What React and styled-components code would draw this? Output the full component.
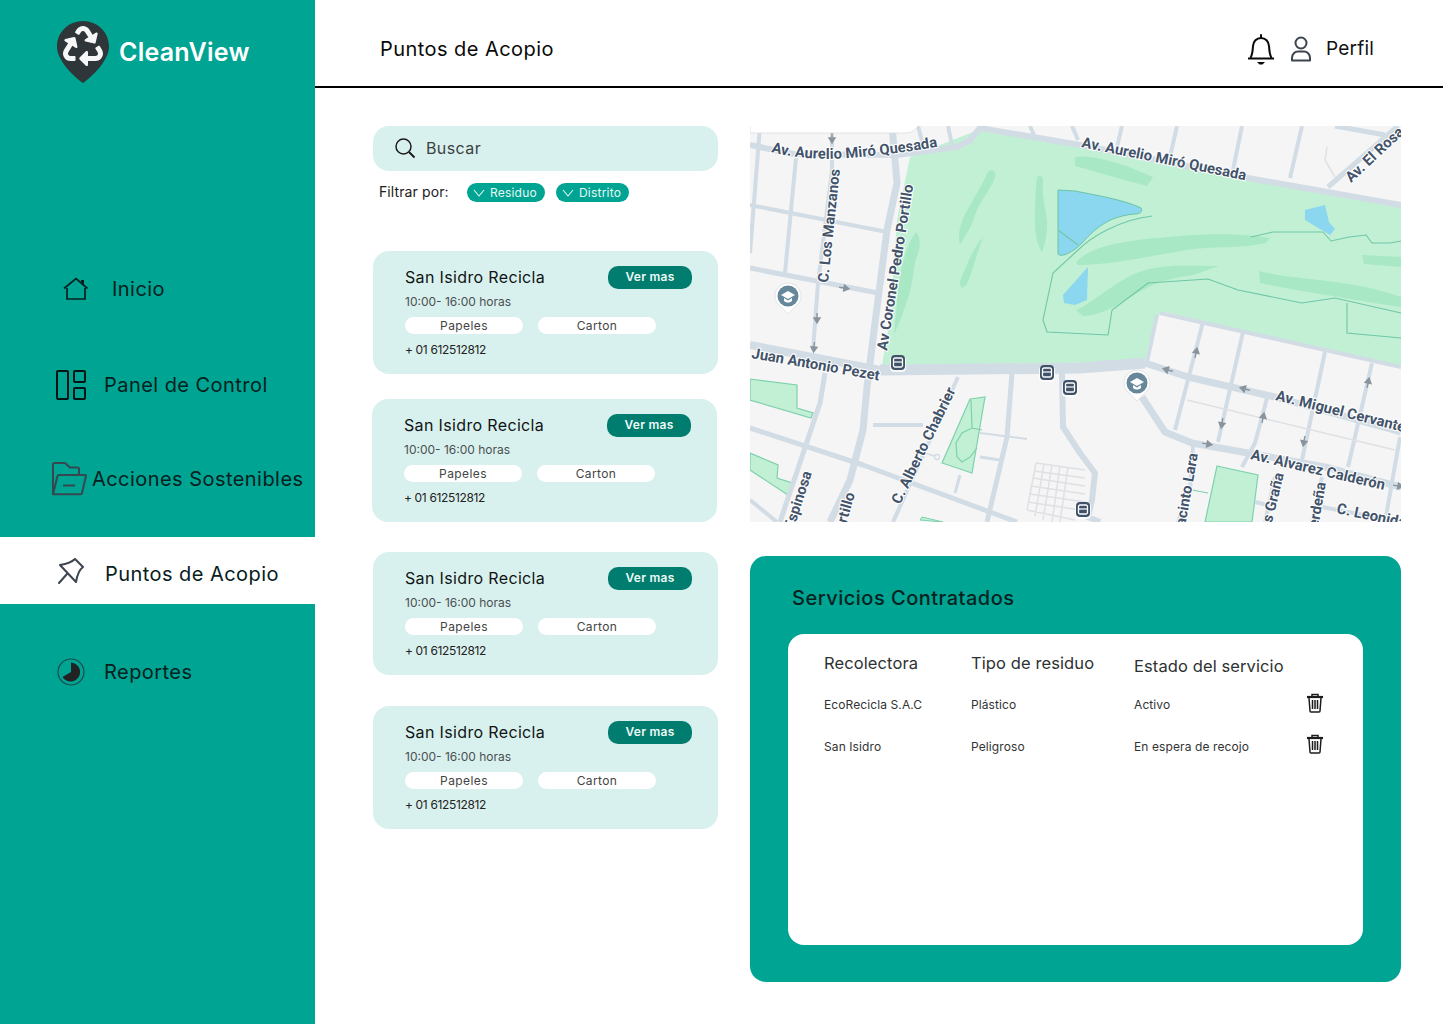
import React from "react";
import styled, { createGlobalStyle } from "styled-components";
import { FaRecycle } from "react-icons/fa";

const GlobalStyle = createGlobalStyle`
  html, body { margin: 0; padding: 0; background: #fff; }
  * { box-sizing: border-box; }
  body { font-family: "Inter", "Liberation Sans", sans-serif; }
`;

const Page = styled.div`
  display: flex;
  width: 1443px;
  height: 1024px;
  overflow: hidden;
`;

const Sidebar = styled.aside`
  width: 315px;
  flex-shrink: 0;
  background: #00a493;
`;

const Logo = styled.div`
  display: flex;
  align-items: flex-start;
  gap: 10px;
  height: 256px;
  padding: 21px 0 0 57px;
`;

const LogoText = styled.span`
  margin-top: 16px;
  color: #fff;
  font-size: 25px;
  line-height: 30px;
  font-weight: 600;
  letter-spacing: 0.25px;
`;

const NavItem = styled.div`
  display: flex;
  align-items: center;
  height: ${(p) => (p.$active ? 67 : 66)}px;
  margin-top: ${(p) => p.$top || 0}px;
  padding-left: ${(p) => p.$left}px;
  gap: ${(p) => p.$gap}px;
  background: ${(p) => (p.$active ? "#fff" : "transparent")};
  color: #07201d;
  font-size: 20px;
  letter-spacing: 0.45px;
`;

const NavLabel = styled.span`
  margin-top: ${(p) => p.$down || 0}px;
  white-space: nowrap;
`;

const Main = styled.main`
  flex: 1;
  display: flex;
  flex-direction: column;
`;

const Header = styled.header`
  display: flex;
  align-items: center;
  height: 88px;
  padding: 12px 69px 0 65px;
  border-bottom: 2px solid #000;
`;

const HeaderTitle = styled.h1`
  flex: 1;
  margin: 0;
  font-size: 20px;
  font-weight: 400;
  letter-spacing: 0.45px;
  color: #0a0a0a;
`;

const HeaderActions = styled.div`
  display: flex;
  align-items: center;
  gap: 15px;
`;

const ProfileText = styled.span`
  margin: -2px 0 0 -1px;
  font-size: 19px;
  letter-spacing: 0.2px;
  color: #111;
`;

const Content = styled.div`
  display: grid;
  grid-template-columns: 345px 651px;
  column-gap: 32px;
  padding: 38px 0 0 58px;
`;

const LeftColumn = styled.section`
  display: flex;
  flex-direction: column;
`;

const SearchBar = styled.div`
  display: flex;
  align-items: center;
  gap: 10px;
  height: 45px;
  padding: 0 0 1px 21px;
  border-radius: 16px;
  background: #d9f1ee;
  font-size: 16px;
  letter-spacing: 0.4px;
  color: #3a3f3f;
`;

const FilterRow = styled.div`
  display: flex;
  align-items: center;
  height: 19px;
  margin-top: 12px;
  padding-left: 6px;
  font-size: 14px;
  letter-spacing: 0.1px;
  color: #1b1b1b;
`;

const FilterLabel = styled.span`
  width: 88px;
  margin-top: -3px;
`;

const Chip = styled.span`
  display: flex;
  align-items: center;
  gap: 5px;
  height: 19px;
  width: ${(p) => p.$width}px;
  margin-right: 11px;
  padding-left: 6px;
  border-radius: 10px;
  background: #00a493;
  color: #e6f7f4;
  font-size: 12px;
  letter-spacing: 0.2px;
`;

const Card = styled.article`
  display: flex;
  flex-direction: column;
  width: 345px;
  height: 123px;
  margin-top: ${(p) => p.$top}px;
  margin-left: ${(p) => p.$shift || 0}px;
  padding: 15px 26px 0 32px;
  border-radius: 16px;
  background: #d9f1ee;
`;

const CardHead = styled.div`
  display: flex;
  align-items: center;
  justify-content: space-between;
  height: 23px;
`;

const CardTitle = styled.h3`
  margin: -2px 0 0;
  font-size: 16px;
  font-weight: 400;
  letter-spacing: 0.35px;
  color: #101414;
`;

const ViewButton = styled.span`
  display: flex;
  align-items: center;
  justify-content: center;
  width: 84px;
  height: 23px;
  padding-bottom: 2px;
  border-radius: 10px;
  background: #007d6e;
  color: #eef9f7;
  font-size: 12px;
  font-weight: 600;
  letter-spacing: 0.25px;
`;

const CardHours = styled.div`
  margin-top: 5px;
  height: 15px;
  line-height: 15px;
  font-size: 12px;
  color: #4a5050;
`;

const Tags = styled.div`
  display: flex;
  gap: 15px;
  margin-top: 8px;
`;

const Tag = styled.span`
  display: flex;
  align-items: center;
  justify-content: center;
  width: 118px;
  height: 17px;
  border-radius: 9px;
  background: #fff;
  font-size: 12px;
  letter-spacing: 0.4px;
  color: #444;
`;

const CardPhone = styled.div`
  margin-top: 8px;
  line-height: 15px;
  font-size: 12px;
  letter-spacing: -0.35px;
  color: #222;
`;

const RightColumn = styled.section`
  display: flex;
  flex-direction: column;
`;

const MapFrame = styled.div`
  height: 396px;
  background: #f5f5f6;
  overflow: hidden;
`;

const ServicesPanel = styled.div`
  display: flex;
  flex-direction: column;
  height: 426px;
  margin-top: 34px;
  padding: 29px 38px 37px;
  border-radius: 16px;
  background: #00a493;
`;

const PanelTitle = styled.h2`
  margin: 0 0 0 4px;
  height: 49px;
  line-height: 27px;
  font-size: 20px;
  font-weight: 500;
  letter-spacing: 0.5px;
  color: #08231f;
`;

const TableCard = styled.div`
  flex: 1;
  padding: 12px 39px 0 36px;
  border-radius: 16px;
  background: #fff;
`;

const TableRow = styled.div`
  display: grid;
  grid-template-columns: 147px 163px 1fr 18px;
  align-items: center;
  height: ${(p) => p.$height}px;
`;

const HeadCell = styled.span`
  font-size: 16.500px;
  letter-spacing: 0.1px;
  color: #2e3232;
  margin-top: ${(p) => p.$down || 0}px;
`;

const BodyCell = styled.span`
  font-size: 12px;
  letter-spacing: 0.1px;
  color: #333;
`;

const TrashSvg = styled.svg`
  margin-top: ${(p) => p.$lift || 0}px;
`;

const MapLabel = styled.text`
  font-family: "Roboto", "Liberation Sans", sans-serif;
  font-size: 14.800px;
  font-weight: 700;
  fill: #42536a;
  stroke: #fff;
  stroke-width: 2px;
  paint-order: stroke;
`;

const LogoPin = () => (
  <svg width="52" height="62" viewBox="0 0 52 62">
    <path
      d="M26 0C11.6 0 0 11.4 0 25.6 0 38.600 14 53 25 61.400c.6.500 1.400.500 2 0C38 53 52 38.600 52 25.600 52 11.400 40.400 0 26 0Z"
      fill="#2f3639"
    />
    <FaRecycle x="6" y="5" size={40} color="#f6f7f7" />
  </svg>
);

const HomeIcon = () => (
  <svg width="26" height="24" viewBox="0 0 26 24" fill="none" stroke="#06211e" strokeWidth="1.700">
    <path d="M1 11.500 13 1.500l11.500 10" />
    <path d="M4 11v11h18V11" />
    <path d="M19.500 7V3" strokeWidth="3" />
  </svg>
);

const PanelIcon = () => (
  <svg width="30" height="30" viewBox="0 0 30 30" fill="none" stroke="#041513" strokeWidth="2">
    <rect x="1" y="1" width="11" height="28" rx="1" />
    <rect x="18" y="1" width="11" height="11" rx="1" />
    <rect x="18" y="18" width="11" height="11" rx="1" />
  </svg>
);

const FolderIcon = () => (
  <svg width="36" height="36" viewBox="51 460 36 36" fill="none" stroke="#37474f" strokeWidth="2" strokeLinejoin="round">
    <path d="M53 493V463.500c0-.800.700-1.500 1.500-1.500H65l5 4.500h7.500c.800 0 1.500.700 1.500 1.500v5.500" />
    <path d="M59 474h26c.700 0 1 .500.900 1.200L82 492c-.200.800-.800 1.300-1.500 1.300H53L57.500 475c.200-.600.800-1 1.500-1Z" />
    <path d="M63 484.500h12" />
  </svg>
);

const PinIcon = () => (
  <svg width="26" height="26" viewBox="58 557 26 26" fill="none" stroke="#3c4450" strokeWidth="2" strokeLinejoin="round" strokeLinecap="round">
    <path d="M60 564C66 563 71 562 75 558l8 8c-4 3-6 9-7 15Z" />
    <path d="M59 582l8-9" />
  </svg>
);

const ReportIcon = () => (
  <svg width="28" height="28" viewBox="0 0 28 28">
    <circle cx="14" cy="14" r="13" fill="none" stroke="#1f4a48" strokeWidth="1.200" />
    <path d="M14 4.500A9.500 9.500 0 1 1 5.500 19L14 14Z" fill="#222" />
  </svg>
);

const BellIcon = () => (
  <svg width="28" height="32" viewBox="0 0 28 32" fill="none" stroke="#0a0a0a" strokeWidth="2">
    <path d="M3.500 25c2.200-4 2.200-8 2.500-12 .3-4.500 3.500-8 8-8s7.700 3.500 8 8c.3 4 .3 8 2.500 12" />
    <path d="M1 25.500h26" />
    <path d="M14 5V2" strokeLinecap="round" />
    <path d="M10 29h8l-2.500 2.500h-3Z" fill="#0a0a0a" stroke="none" />
  </svg>
);

const UserIcon = () => (
  <svg width="22" height="26" viewBox="0 0 22 26" fill="none" stroke="#3c4450" strokeWidth="2">
    <circle cx="11" cy="7" r="5.500" />
    <path d="M2 24.500v-2.500c0-4 3-6.500 6-6.500h6c3 0 6 2.500 6 6.500v2.500Z" strokeLinejoin="round" />
  </svg>
);

const SearchIcon = () => (
  <svg width="22" height="22" viewBox="0 0 22 22" fill="none" stroke="#1c1c1c" strokeWidth="1.500">
    <circle cx="9.500" cy="9.500" r="7.500" />
    <path d="M15 15l5.500 5.500" strokeWidth="2" />
  </svg>
);

const ChevronIcon = () => (
  <svg width="12" height="8" viewBox="0 0 12 8" fill="none" stroke="#e6f7f4" strokeWidth="1.100">
    <path d="M1 1l5 6 5-6" />
  </svg>
);

const TrashIcon = ({ lift }) => (
  <TrashSvg $lift={lift} width="18" height="20" viewBox="0 0 18 20" fill="none" stroke="#1c1c1c" strokeWidth="1.500">
    <path d="M1 4h16" strokeWidth="2.200" />
    <path d="M6 3V1.500h6V3" />
    <path d="M3 5l1 13c0 .600.500 1 1 1h8c.500 0 1-.400 1-1l1-13" />
    <path d="M6.500 7v9M9 7v9M11.500 7v9" />
  </TrashSvg>
);

// all map coordinates are page pixels, the viewBox starts at the map's corner
const roads = [
  ["M750 145L793 154 897 155 957 147 970 140 980 128 1080 145 1248 178 1401 205", 6],
  ["M760 126L750 253", 4],
  ["M796 158L785 273", 4],
  ["M832 126V170L818 283 813 350", 4],
  ["M750 205L887 232", 4],
  ["M750 268L878 293", 5],
  ["M892 126L897 183 887 230 875 323 867 387 863 430 850 480 830 522", 7],
  ["M918 126L923 145M948 126L952 145M1030 126L1034 135M1072 126L1078 140", 4],
  ["M1122 126L1117 147M1177 126L1170 157M1242 126L1233 170M1302 126L1290 178", 4],
  ["M1398 126L1328 187M1335 126L1385 135", 5],
  ["M750 345L880 370", 8],
  ["M880 370L1080 368 1145 363", 11],
  ["M1145 363L1188 377 1275 397 1401 432", 7],
  ["M958 377L893 522", 4],
  ["M1012 373L1007 437 987 522", 5],
  ["M1062 373L1063 427 1080 453 1095 473 1092 500 1088 517 1100 522", 6],
  ["M750 428L863 465 1017 522", 5],
  ["M825 373L820 403 780 522", 5],
  ["M873 425H923", 4],
  ["M750 500L777 522", 4],
  ["M980 433L1027 439", 2],
  ["M980 457L1000 460M960 475L955 493", 3],
  ["M925 453L937 457", 1.500],
  ["M1203 322L1175 430", 4],
  ["M1243 332L1218 442", 4],
  ["M1325 352L1302 460", 4],
  ["M1372 363L1348 467", 4],
  ["M1267 398L1255 443 1242 467", 4],
  ["M1400 437L1385 522", 4],
  ["M1160 313L1401 367M1157 315L1147 362", 4],
  ["M1142 397L1165 432 1192 443 1248 453 1325 467 1401 487", 7],
  ["M1193 445L1190 490 1178 522M1275 477L1265 522M1322 477L1312 522", 4],
  ["M1322 507L1401 522M1255 502L1268 505", 4],
];

const faintLines =
  "M1187 400L1395 450M1327 147L1325 160 1335 177M1036 463L1027 510M1044 464L1035 516M1052 465L1043 520M1060 466L1052 522M1068 467L1060 522M1036 463L1085 470M1034 471L1085 478M1033 478L1085 486M1031 486L1085 494M1030 494L1085 502M1028 502L1080 510M1027 510L1075 520";

const darkGreens = [
  "M988 172c3-4 9-1 7 5-3 10-12 20-18 33-3 6-4 14-10 23l-7 12c-3-10 1-25 8-36 7-13 14-24 20-37Z",
  "M983 237c-5 13-9 28-13 40-2 5-6 13-9 10-3-5 2-12 5-20 4-10 10-22 17-30Z",
  "M1037 177c4-3 7 1 6 6-1 12 2 24 4 36 1 12-2 26-5 33-5-8-7-18-7-30 0-15 0-30 2-45Z",
  "M916 232c4 5 5 12 2 22-4 8-4 18-6 28-2 12-10 35-18 53l4-45c2-20 8-45 18-58Z",
  "M1075 157c20-2 45 5 78 20l-6 9c-25-6-52-15-72-20Z",
  "M1076 262c20-20 60-22 104-26 32-3 70-2 90 2l-4 5c-25 6-55 3-80 7-35 6-75 15-108 15Z",
  "M1076 310c15-6 32-23 58-36 23-10 50-9 85-8l-26 9c-20 3-35 6-52 16-20 12-40 25-58 25Z",
  "M1259 271c40 10 90 7 142 26v10c-40-6-100-16-141-24Z",
  "M1362 255l39 2v10l-37-3Z",
];

const Bus = ({ x, y }) => (
  <g transform={`translate(${x} ${y})`}>
    <rect x="-8" y="-7" width="16" height="16" rx="4" fill="#fff" opacity="0.800" />
    <rect x="-7" y="-8" width="14" height="15" rx="4" fill="#3f5268" />
    <rect x="-4.500" y="-5" width="9" height="9" rx="1.500" fill="none" stroke="#fff" strokeWidth="1.300" />
    <path d="M-4.500 -1H4.500" stroke="#fff" strokeWidth="1.200" />
  </g>
);

const SchoolPin = ({ x, y }) => (
  <g transform={`translate(${x} ${y})`}>
    <path d="M-13 0a13 13 0 1 1 24 7L0 18-11 7a13 13 0 0 1-2-7Z" fill="#fff" stroke="#e2e4e6" />
    <circle r="10.500" fill="#67879a" />
    <path d="M-7-1 0-5 7-1 0 3Z" fill="#fff" />
    <path d="M-4 2v3c3 2 5 2 8 0V2L0 4.500Z" fill="#fff" />
  </g>
);

const Arrow = ({ x, y, a }) => (
  <path
    transform={`translate(${x} ${y}) rotate(${a})`}
    d="M-5 0H2M0-3L5 0 0 3Z"
    stroke="#8a949e"
    strokeWidth="1.400"
    fill="#8a949e"
  />
);

const CityMap = () => (
  <svg width="651" height="396" viewBox="750 126 651 396">
    <defs>
      <path id="aurelioLeft" d="M771 152Q810 162 860 157T942 146" />
    </defs>
    <rect x="750" y="126" width="651" height="396" fill="#f5f5f6" />
    <path d="M983 128L1401 206V367L1165 312 1155 318 1145 362 882 365 890 320 897 220 910 157Z" fill="#c1f0d4" />
    <path d="M750 379L797 385V408L813 413 811 418 750 400Z" fill="#c1f0d4" stroke="#7fd1ad" strokeWidth="1.200" />
    <path d="M750 453L778 465 777 478 792 483 788 495 750 470Z" fill="#c1f0d4" stroke="#7fd1ad" strokeWidth="1.200" />
    <path d="M970 399L985 397 972 473 942 463Z" fill="#c1f0d4" stroke="#7fd1ad" strokeWidth="1.200" />
    <path d="M971 400L972 428 982 430M972 428L962 433 956 443 957 457 962 462 970 457 977 448" fill="none" stroke="#7fd1ad" strokeWidth="1.200" />
    <path d="M920 520L922 517 943 522Z" fill="#c1f0d4" stroke="#7fd1ad" />
    <path d="M1217 466L1258 475 1252 522H1205Z" fill="#c1f0d4" stroke="#7fd1ad" strokeWidth="1.200" />
    <path d="M1192 490L1208 493" stroke="#7fd1ad" strokeWidth="1.200" />
    {darkGreens.map((d) => (
      <path key={d} d={d} fill="#a9e8c4" />
    ))}
    <path d="M1058 190L1075 191C1095 195 1125 200 1141 208 1143 212 1140 214 1135 214 1112 216 1098 225 1082 243 1073 252 1062 258 1058 254Z" fill="#8bd7ef" stroke="#6dc3a6" strokeWidth="1" />
    <path d="M1088 267L1087 300 1075 305 1064 303 1063 295Z" fill="#8bd7ef" />
    <path d="M1305 210L1325 205 1329 222 1335 229 1330 235 1305 220Z" fill="#8bd7ef" />
    <path
      d="M1043 320L1053 273 1078 250C1090 238 1118 220 1152 216M1058 230L1078 245M1251 237L1273 232H1323L1331 241 1349 237 1366 235 1372 243H1390L1401 241M1043 320L1047 332 1108 335 1110 323 1112 310 1148 283 1208 279 1238 290 1302 303 1335 298 1401 313M1347 303V333L1401 338"
      fill="none"
      stroke="#70c6a8"
      strokeWidth="1.100"
    />
    {roads.map(([d, w]) => (
      <path key={d} d={d} fill="none" stroke="#d2dce5" strokeWidth={w} strokeLinejoin="round" />
    ))}
    <path d={faintLines} fill="none" stroke="#dfe0e3" strokeWidth="1.500" />
    <circle cx="937" cy="457" r="2.500" fill="#f5f5f6" stroke="#d2dce5" strokeWidth="1.300" />
    <Arrow x={844} y={288} a={8} />
    <Arrow x={817} y={318} a={90} />
    <Arrow x={814} y={347} a={95} />
    <Arrow x={832} y={138} a={90} />
    <Arrow x={1196} y={353} a={-78} />
    <Arrow x={1368} y={383} a={-78} />
    <Arrow x={1168} y={370} a={195} />
    <Arrow x={1245} y={389} a={195} />
    <Arrow x={1222} y={423} a={100} />
    <Arrow x={1263} y={418} a={-78} />
    <Arrow x={1304} y={441} a={100} />
    <Arrow x={1207} y={444} a={10} />
    <Arrow x={1398} y={486} a={10} />

    <MapLabel>
      <textPath href="#aurelioLeft">Av. Aurelio Miró Quesada</textPath>
    </MapLabel>
    <MapLabel transform="translate(1081 147) rotate(11.500)">Av. Aurelio Miró Quesada</MapLabel>
    <MapLabel transform="translate(1351 183) rotate(-43)">Av. El Rosa</MapLabel>
    <MapLabel transform="translate(828 283) rotate(-84)">C. Los Manzanos</MapLabel>
    <MapLabel transform="translate(887 351) rotate(-81)">Av Coronel Pedro Portillo</MapLabel>
    <MapLabel transform="translate(751 358) rotate(10)">Juan Antonio Pezet</MapLabel>
    <MapLabel transform="translate(900 505) rotate(-64)">C. Alberto Chabrier</MapLabel>
    <MapLabel textAnchor="end" transform="translate(812 473) rotate(-72)">Espinosa</MapLabel>
    <MapLabel textAnchor="end" transform="translate(855 494) rotate(-74)">Portillo</MapLabel>
    <MapLabel transform="translate(1275 400) rotate(14)">Av. Miguel Cervantes</MapLabel>
    <MapLabel transform="translate(1250 459) rotate(13)">Av. Alvarez Calderón</MapLabel>
    <MapLabel textAnchor="end" transform="translate(1198 454) rotate(-80)">Jacinto Lara</MapLabel>
    <MapLabel textAnchor="end" transform="translate(1284 474) rotate(-76)">Los Graña</MapLabel>
    <MapLabel textAnchor="end" transform="translate(1326 483) rotate(-80)">Cerdeña</MapLabel>
    <MapLabel transform="translate(1336 513) rotate(12)">C. Leonidas</MapLabel>

    <SchoolPin x={788} y={296} />
    <SchoolPin x={1137} y={383} />
    <Bus x={898} y={363} />
    <Bus x={1047} y={373} />
    <Bus x={1070} y={388} />
    <Bus x={1083} y={510} />
    <path d="M750 125H918V126C915 130 912 133 906 133H750Z" fill="#fff" stroke="#dcdcdc" strokeWidth="0.800" />
  </svg>
);

const cards = [
  { top: 49 },
  { top: 25, shift: -1 },
  { top: 30 },
  { top: 31 },
];

const services = [
  { name: "EcoRecicla S.A.C", type: "Plástico", status: "Activo", height: 48, lift: -2 },
  { name: "San Isidro", type: "Peligroso", status: "En espera de recojo", height: 36, lift: -4 },
];

export default function App() {
  return (
    <>
      <GlobalStyle />
      <Page>
        <Sidebar>
          <Logo>
            <LogoPin />
            <LogoText>CleanView</LogoText>
          </Logo>
          <NavItem $left={63} $gap={23}>
            <HomeIcon />
            <NavLabel>Inicio</NavLabel>
          </NavItem>
          <NavItem $top={30} $left={56} $gap={18}>
            <PanelIcon />
            <NavLabel>Panel de Control</NavLabel>
          </NavItem>
          <NavItem $top={28} $left={51} $gap={5}>
            <FolderIcon />
            <NavLabel>Acciones Sostenibles</NavLabel>
          </NavItem>
          <NavItem $top={25} $left={58} $gap={21} $active>
            <PinIcon />
            <NavLabel $down={7}>Puntos de Acopio</NavLabel>
          </NavItem>
          <NavItem $top={35} $left={57} $gap={19}>
            <ReportIcon />
            <NavLabel>Reportes</NavLabel>
          </NavItem>
        </Sidebar>
        <Main>
          <Header>
            <HeaderTitle>Puntos de Acopio</HeaderTitle>
            <HeaderActions>
              <BellIcon />
              <UserIcon />
              <ProfileText>Perfil</ProfileText>
            </HeaderActions>
          </Header>
          <Content>
            <LeftColumn>
              <SearchBar>
                <SearchIcon />
                Buscar
              </SearchBar>
              <FilterRow>
                <FilterLabel>Filtrar por:</FilterLabel>
                <Chip $width={78}>
                  <ChevronIcon />
                  Residuo
                </Chip>
                <Chip $width={73}>
                  <ChevronIcon />
                  Distrito
                </Chip>
              </FilterRow>
              {cards.map((card, index) => (
                <Card key={index} $top={card.top} $shift={card.shift}>
                  <CardHead>
                    <CardTitle>San Isidro Recicla</CardTitle>
                    <ViewButton>Ver mas</ViewButton>
                  </CardHead>
                  <CardHours>10:00- 16:00 horas</CardHours>
                  <Tags>
                    <Tag>Papeles</Tag>
                    <Tag>Carton</Tag>
                  </Tags>
                  <CardPhone>+ 01 612512812</CardPhone>
                </Card>
              ))}
            </LeftColumn>
            <RightColumn>
              <MapFrame>
                <CityMap />
              </MapFrame>
              <ServicesPanel>
                <PanelTitle>Servicios Contratados</PanelTitle>
                <TableCard>
                  <TableRow $height={34}>
                    <HeadCell>Recolectora</HeadCell>
                    <HeadCell>Tipo de residuo</HeadCell>
                    <HeadCell $down={6}>Estado del servicio</HeadCell>
                  </TableRow>
                  {services.map((row) => (
                    <TableRow key={row.name} $height={row.height}>
                      <BodyCell>{row.name}</BodyCell>
                      <BodyCell>{row.type}</BodyCell>
                      <BodyCell>{row.status}</BodyCell>
                      <TrashIcon lift={row.lift} />
                    </TableRow>
                  ))}
                </TableCard>
              </ServicesPanel>
            </RightColumn>
          </Content>
        </Main>
      </Page>
    </>
  );
}
